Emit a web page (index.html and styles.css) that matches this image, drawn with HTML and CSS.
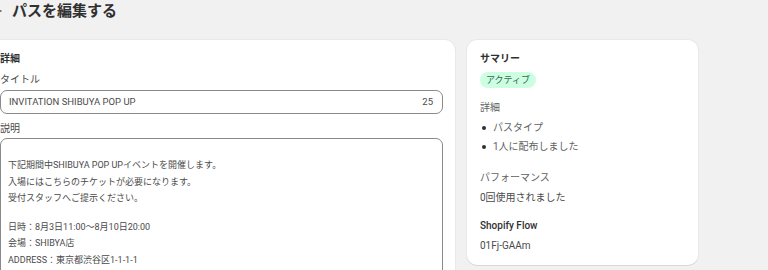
FILE: index.html
```html
<!DOCTYPE html>
<html lang="ja">
<head>
  <meta charset="UTF-8">
  <meta name="viewport" content="width=device-width, initial-scale=1.0">
  <title>パスを編集する</title>
  <link rel="stylesheet" href="styles.css">
</head>
<body>
  <div class="page">
    <div class="page-header">
      <button class="back-button" aria-label="戻る">
        <svg width="14" height="14" viewBox="0 0 14 14"><path d="M13 7H2M6 3L2 7l4 4" fill="none" stroke="#4a4a4a" stroke-width="1.3" stroke-linecap="round" stroke-linejoin="round"/></svg>
      </button>
      <h1>パスを編集する</h1>
    </div>

    <div class="layout">
      <!-- 詳細 -->
      <div class="card main-card">
        <h2>詳細</h2>
        <label class="field-label" for="passTitle">タイトル</label>
        <div class="text-field">
          <span id="passTitle">INVITATION SHIBUYA POP UP</span>
          <span class="char-count">25</span>
        </div>
        <label class="field-label desc-label">説明</label>
        <div class="text-area">
          <p>下記期間中SHIBUYA POP UPイベントを開催します。<br>入場にはこちらのチケットが必要になります。<br>受付スタッフへご提示ください。</p>
          <p>日時：8月3日11:00～8月10日20:00<br>会場：SHIBYA店<br>ADDRESS：東京都渋谷区1-1-1-1</p>
        </div>
      </div>

      <!-- サマリー -->
      <div class="card summary-card">
        <h2>サマリー</h2>
        <span class="badge">アクティブ</span>
        <p class="section-title">詳細</p>
        <ul class="summary-list">
          <li>パスタイプ</li>
          <li>1人に配布しました</li>
        </ul>
        <p class="section-title perf">パフォーマンス</p>
        <p class="section-text">0回使用されました</p>
        <p class="section-title flow">Shopify Flow</p>
        <p class="section-text">01Fj-GAAm</p>
      </div>
    </div>
  </div>
</body>
</html>
```

FILE: styles.css
```css
body {
  font-family: "Roboto", "Noto Sans CJK JP", sans-serif;
  font-size: 10px;
  line-height: 16px;
  margin: 0;
  padding: 0;
  background: #f1f1f1;
  color: #303030;
  overflow: hidden;
}
.page {
  margin-left: -16px;
  width: 714px;
}
.page-header {
  display: flex;
  align-items: center;
  gap: 6px;
  height: 22px;
  margin-bottom: 18px;
}
.back-button {
  width: 22px;
  height: 22px;
  padding: 0;
  border: none;
  background: none;
  display: flex;
  align-items: center;
  justify-content: center;
}
h1 {
  margin: 0;
  font-size: 15px;
  font-weight: bold;
  color: #303030;
}
.layout {
  display: grid;
  grid-template-columns: 471px 231px;
  gap: 12px;
  align-items: start;
}
.card {
  background: #fff;
  border-radius: 10px;
  box-shadow: 0 1px 0 rgba(0, 0, 0, 0.07), 0 0 0 1px rgba(0, 0, 0, 0.03);
  padding: 11px 13px 11px 13px;
}
.main-card {
  padding: 11px 12px 20px 16px;
  border-bottom-left-radius: 0;
  border-bottom-right-radius: 0;
}
h2 {
  margin: 0;
  font-size: 10px;
  font-weight: bold;
}
.field-label {
  display: block;
  margin-top: 5px;
  color: #4a4a4a;
}
.desc-label {
  margin-top: 7px;
}
.text-field {
  margin-top: 2px;
  height: 24px;
  box-sizing: border-box;
  border: 1px solid #8a8a8a;
  border-radius: 7px;
  display: flex;
  align-items: center;
  justify-content: space-between;
  padding: 0 9px 0 8px;
  font-size: 9.5px;
  color: #4a4a4a;
}
.text-area {
  margin-top: 1px;
  border: 1px solid #8a8a8a;
  border-radius: 7px;
  padding: 18px 8px 8px 7px;
  font-size: 9px;
  color: #4a4a4a;
  height: 200px;
}
.text-area p {
  margin: 0 0 12px;
  line-height: 16.5px;
}
.badge {
  display: inline-block;
  margin-top: 5px;
  padding: 0 6px;
  height: 16px;
  line-height: 16px;
  font-size: 9px;
  border-radius: 8px;
  background: #cdfee1;
  color: #2e6b4e;
}
.section-title {
  margin: 12px 0 0;
  color: #616161;
}
.summary-list {
  list-style: none;
  margin: 4px 0 0;
  padding: 0;
  color: #616161;
}
.summary-list li {
  position: relative;
  padding-left: 13px;
  margin-bottom: 3px;
}
.summary-list li::before {
  content: "";
  position: absolute;
  left: 2px;
  top: 6px;
  width: 4px;
  height: 4px;
  border-radius: 50%;
  background: #303030;
}
.perf {
  margin-top: 15px;
}
.flow {
  color: #303030;
  font-weight: 500;
  margin-top: 12px;
}
.section-text {
  margin: 4px 0 0;
  color: #4a4a4a;
}
```
